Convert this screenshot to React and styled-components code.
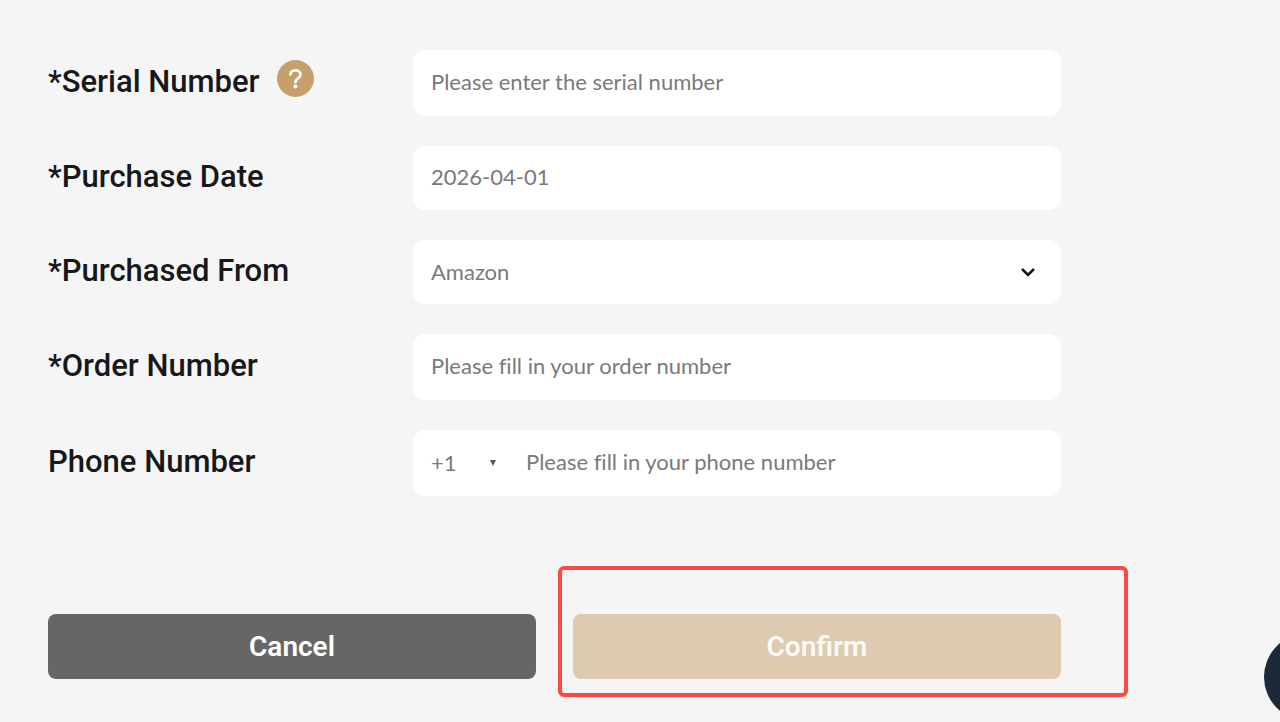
import { useState } from 'react';
import styled, { createGlobalStyle } from 'styled-components';

const pageColor = '#f5f5f5';
const textColor = '#18181a';
const mutedColor = '#7a7a7a';
const goldColor = '#c69f6d';

const GlobalStyle = createGlobalStyle`
  * {
    box-sizing: border-box;
  }

  body {
    margin: 0;
    background-color: ${pageColor};
    color: ${textColor};
    font-family: Lato, Roboto, sans-serif;
  }
`;

const Form = styled.form`
  padding: 50px 219px 24px 48px;
`;

const Fields = styled.div`
  display: flex;
  flex-direction: column;
  gap: 30px;
`;

const Row = styled.div`
  display: grid;
  grid-template-columns: 365px 1fr;
  align-items: center;
`;

const LabelCell = styled.div`
  display: flex;
  align-items: center;
  gap: 17px;
  padding-bottom: 2px;
`;

const Label = styled.label`
  font-family: Roboto, sans-serif;
  font-size: 31px;
  font-weight: 500;
  line-height: 40px;
  white-space: nowrap;
`;

const HelpButton = styled.button`
  display: flex;
  width: 37px;
  height: 37px;
  margin-bottom: 8px;
  padding: 0;
  border: none;
  border-radius: 50%;
  background-color: ${goldColor};
  color: #fff;
  cursor: pointer;
`;

const controlText = `
  flex: 1;
  min-width: 0;
  border: none;
  outline: none;
  background-color: transparent;
  color: ${mutedColor};
  font-family: inherit;
  font-size: 22px;
  font-variant-ligatures: none;
`;

const Field = styled.div`
  display: flex;
  align-items: center;
  height: ${(props) => (props.$compact ? 64 : 66)}px;
  padding: 0 18px;
  border-radius: 12px;
  background-color: #fff;
`;

const Input = styled.input`
  ${controlText}
  padding: 0 0 4px;

  &::placeholder {
    color: ${mutedColor};
    opacity: 1;
  }
`;

const Select = styled.select`
  ${controlText}
  padding: 0 0 2px;
  appearance: none;
`;

const CodePicker = styled.div`
  display: flex;
  align-items: center;
  width: 65px;
  margin-right: 30px;
`;

const Chevron = styled.svg`
  width: 14px;
  height: 10px;
  margin-right: 8px;
  pointer-events: none;
`;

const Triangle = styled.svg`
  width: 6px;
  height: 6px;
  pointer-events: none;
`;

const Actions = styled.div`
  display: grid;
  grid-template-columns: 1fr 1fr;
  gap: 37px;
  margin-top: 118px;
`;

const ButtonSlot = styled.div`
  position: relative;
  display: grid;
`;

const Button = styled.button`
  height: 65px;
  padding: 0;
  border: none;
  border-radius: 8px;
  background-color: ${(props) => (props.$primary ? '#ddcab1' : '#666')};
  color: ${(props) => (props.$primary ? '#fbf8f5' : '#fff')};
  font-family: Roboto, sans-serif;
  font-size: 28px;
  font-weight: 600;
  cursor: pointer;
`;

// Red frame drawn around the confirm button
const Highlight = styled.div`
  position: absolute;
  inset: -48px -67px -18px -15px;
  border: 4px solid #fb4a46;
  border-radius: 6px;
  pointer-events: none;
`;

// Floating bubble, half outside the right edge
const ChatBubble = styled.button`
  position: fixed;
  right: -72px;
  bottom: 1px;
  width: 88px;
  height: 88px;
  border: none;
  border-radius: 50%;
  background-color: #1c2938;
`;

const App = () => {
  const [date, setDate] = useState('2026-04-01');

  return (
    <>
      <GlobalStyle />
      <Form onSubmit={(e) => e.preventDefault()}>
        <Fields>
          <Row>
            <LabelCell>
              <Label htmlFor="serial">*Serial Number</Label>
              <HelpButton type="button" aria-label="Help">
                <svg width="37" height="37" viewBox="0 0 37 37" fill="none">
                  <path
                    d="M13.4 14.6C13.4 12 15.6 10.4 18.4 10.4C21.3 10.4 23.5 12 23.5 14.7C23.5 18.3 18.4 18.4 18.4 22.2"
                    stroke="currentColor"
                    strokeWidth="2.6"
                    strokeLinecap="round"
                  />
                  <circle cx="18.4" cy="26.4" r="2" fill="currentColor" />
                </svg>
              </HelpButton>
            </LabelCell>
            <Field>
              <Input id="serial" placeholder="Please enter the serial number" />
            </Field>
          </Row>

          <Row>
            <LabelCell>
              <Label htmlFor="date">*Purchase Date</Label>
            </LabelCell>
            <Field $compact>
              <Input id="date" value={date} onChange={(e) => setDate(e.target.value)} />
            </Field>
          </Row>

          <Row>
            <LabelCell>
              <Label htmlFor="store">*Purchased From</Label>
            </LabelCell>
            <Field $compact>
              <Select id="store">
                <option>Amazon</option>
              </Select>
              <Chevron viewBox="0 0 14 10" fill="none">
                <path d="M1 2L7 8L13 2" stroke={textColor} strokeWidth="2.6" />
              </Chevron>
            </Field>
          </Row>

          <Row>
            <LabelCell>
              <Label htmlFor="order">*Order Number</Label>
            </LabelCell>
            <Field>
              <Input id="order" placeholder="Please fill in your order number" />
            </Field>
          </Row>

          <Row>
            <LabelCell>
              <Label htmlFor="phone">Phone Number</Label>
            </LabelCell>
            <Field>
              <CodePicker>
                <Select aria-label="Country code">
                  <option>+1</option>
                </Select>
                <Triangle viewBox="0 0 6 6">
                  <path d="M0 0H6L3 6Z" fill="#555" />
                </Triangle>
              </CodePicker>
              <Input id="phone" type="tel" placeholder="Please fill in your phone number" />
            </Field>
          </Row>
        </Fields>

        <Actions>
          <Button type="button">Cancel</Button>
          <ButtonSlot>
            <Button type="submit" $primary>
              Confirm
            </Button>
            <Highlight />
          </ButtonSlot>
        </Actions>
      </Form>
      <ChatBubble type="button" aria-label="Chat" />
    </>
  );
};

export default App;
